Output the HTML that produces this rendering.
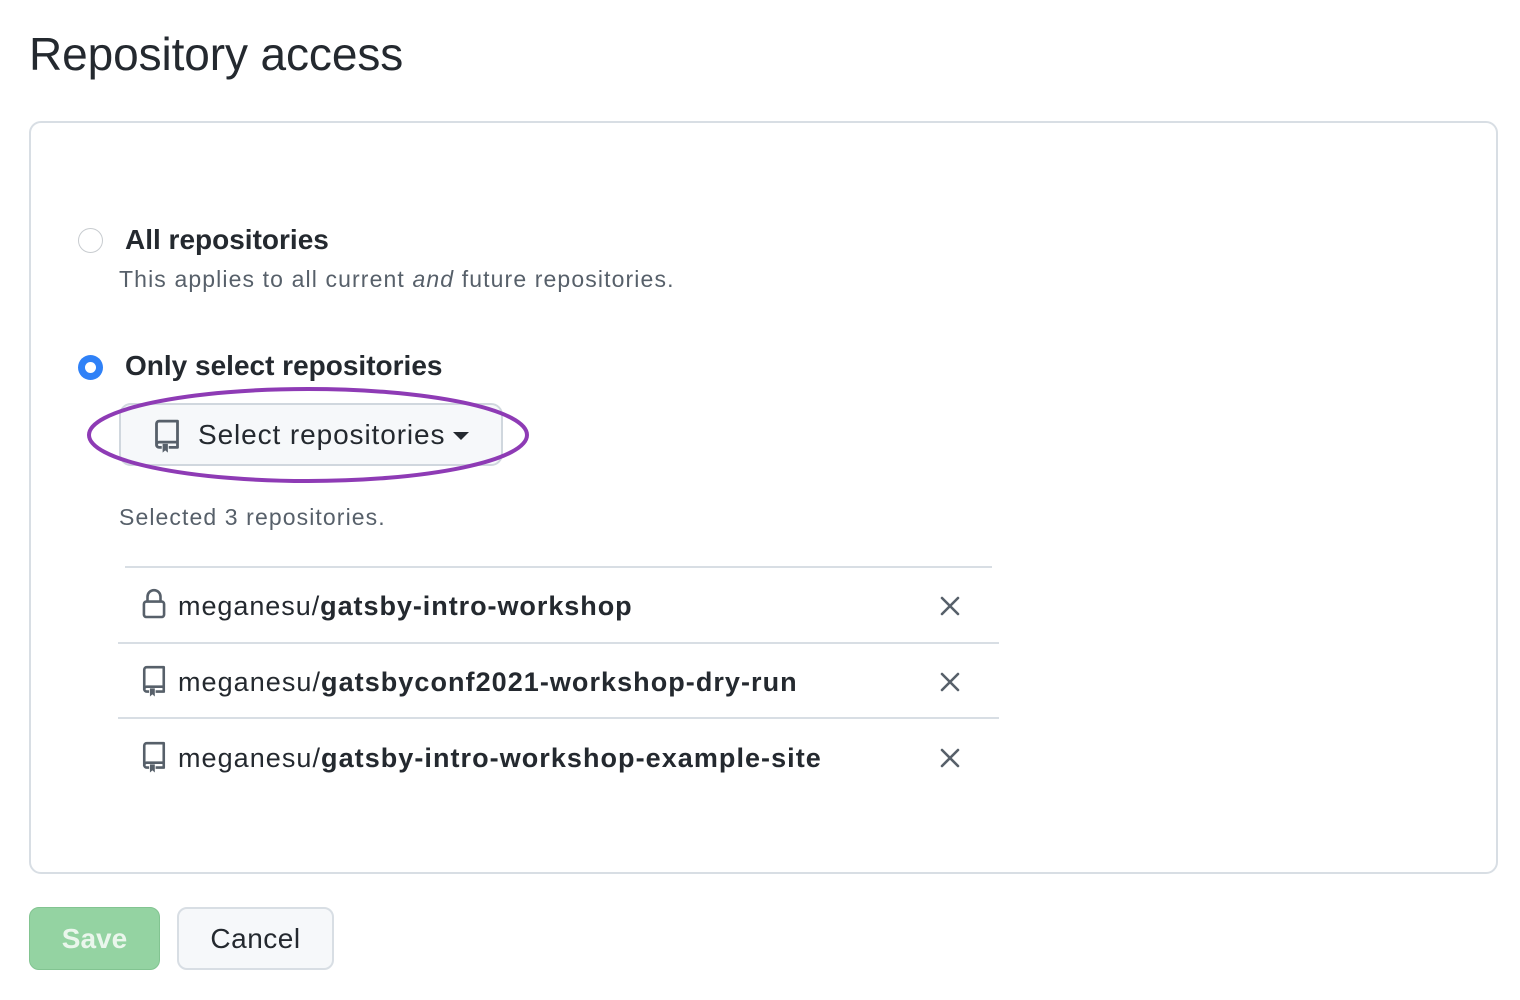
<!DOCTYPE html>
<html><head><meta charset="utf-8"><style>
*{box-sizing:border-box;margin:0;padding:0}
body{width:1520px;height:1000px;background:#fff;font-family:"Liberation Sans",sans-serif;color:#24292f;position:relative;overflow:hidden}
.a{position:absolute;white-space:nowrap}
h1{position:absolute;left:29px;top:26px;font-size:46px;font-weight:400;line-height:56px;letter-spacing:-0.1px}
.card{position:absolute;left:29px;top:121px;width:1469px;height:753px;border:2px solid #d8dee4;border-radius:12px}
.lbl{font-size:28px;font-weight:700;line-height:34px}
.desc{font-size:23px;color:#57606a;line-height:28px;letter-spacing:1.12px}
.btn{position:absolute;left:119px;top:403px;width:384px;height:63px;border:2px solid #d0d7de;border-radius:12px;background:#f6f8fa}
.row{font-size:27px;line-height:34px;letter-spacing:1.05px}
.line{position:absolute;height:2px;background:#d8dee4}
</style></head><body>
<h1>Repository access</h1>
<div class="card"></div>
<div class="a" style="left:78px;top:228px;width:25px;height:25px;border:1.5px solid #c8ccd0;border-radius:50%;background:#fff"></div>
<div class="a lbl" style="left:125px;top:223px">All repositories</div>
<div class="a desc" style="left:119px;top:265px">This applies to all current <i>and</i> future repositories.</div>
<div class="a" style="left:78px;top:355px;width:25px;height:25px;border-radius:50%;background:#2f81f7"></div>
<div class="a" style="left:85px;top:362px;width:11px;height:11px;border-radius:50%;background:#fff"></div>
<div class="a lbl" style="left:125px;top:349px">Only select repositories</div>
<div class="btn"></div>
<svg class="a" style="left:153px;top:419px" width="28" height="34" viewBox="0 0 16 19"><path d="M2 15V2.5A1.5 1.5 0 0 1 3.5 1H14v12H3.5A1.5 1.5 0 0 0 2 14.5 1.5 1.5 0 0 0 3.5 16H5M9 16h5v-3" fill="none" stroke="#57606a" stroke-width="1.6" stroke-linejoin="round"/><path d="M5.5 14h3v5l-1.5-1.3L5.5 19z" fill="#57606a"/></svg>
<div class="a" style="left:198px;top:418px;font-size:28px;line-height:34px;letter-spacing:0.9px">Select repositories</div>
<div class="a" style="left:453px;top:432px;width:0;height:0;border-left:8px solid transparent;border-right:8px solid transparent;border-top:8px solid #24292f"></div>
<svg class="a" style="left:0;top:0" width="1520" height="1000"><ellipse cx="308" cy="435" rx="219" ry="46" fill="none" stroke="#8e3bb5" stroke-width="4"/></svg>
<div class="a desc" style="left:119px;top:503px;letter-spacing:1.1px">Selected 3 repositories.</div>
<div class="line" style="left:125px;top:566px;width:867px"></div>
<div class="line" style="left:118px;top:642px;width:881px"></div>
<div class="line" style="left:118px;top:717px;width:881px"></div>
<svg class="a" style="left:141px;top:588px" width="26" height="32" viewBox="0 0 16 19"><path d="M4 8V5a4 4 0 0 1 8 0v3" fill="none" stroke="#57606a" stroke-width="1.6"/><rect x="1.8" y="8" width="12.4" height="9.5" rx="1.5" fill="none" stroke="#57606a" stroke-width="1.6"/></svg>
<div class="a row" style="left:178px;top:589px;letter-spacing:0.95px">meganesu/<b>gatsby-intro-workshop</b></div>
<svg class="a" style="left:141px;top:664px" width="26" height="34" viewBox="0 0 16 19"><path d="M2 15V2.5A1.5 1.5 0 0 1 3.5 1H14v12H3.5A1.5 1.5 0 0 0 2 14.5 1.5 1.5 0 0 0 3.5 16H5M9 16h5v-3" fill="none" stroke="#57606a" stroke-width="1.6" stroke-linejoin="round"/><path d="M5.5 14h3v5l-1.5-1.3L5.5 19z" fill="#57606a"/></svg>
<div class="a row" style="left:178px;top:665px">meganesu/<b>gatsbyconf2021-workshop-dry-run</b></div>
<svg class="a" style="left:141px;top:740px" width="26" height="34" viewBox="0 0 16 19"><path d="M2 15V2.5A1.5 1.5 0 0 1 3.5 1H14v12H3.5A1.5 1.5 0 0 0 2 14.5 1.5 1.5 0 0 0 3.5 16H5M9 16h5v-3" fill="none" stroke="#57606a" stroke-width="1.6" stroke-linejoin="round"/><path d="M5.5 14h3v5l-1.5-1.3L5.5 19z" fill="#57606a"/></svg>
<div class="a row" style="left:178px;top:741px">meganesu/<b>gatsby-intro-workshop-example-site</b></div>
<svg class="a" style="left:0;top:0" width="1520" height="1000"><g stroke="#57606a" stroke-width="2.6" stroke-linecap="round"><path d="M942 598l16 16M958 598l-16 16M942 674l16 16M958 674l-16 16M942 750l16 16M958 750l-16 16"/></g></svg>
<div class="a" style="left:29px;top:907px;width:131px;height:63px;border-radius:10px;background:#94d3a2;border:1px solid #82c491;color:#eaf6ec;font-size:28px;font-weight:700;text-align:center;line-height:61px">Save</div>
<div class="a" style="left:177px;top:907px;width:157px;height:63px;border-radius:10px;background:#f6f8fa;border:2px solid #d8dee4;font-size:28px;text-align:center;line-height:59px;letter-spacing:0.5px">Cancel</div>
</body></html>
